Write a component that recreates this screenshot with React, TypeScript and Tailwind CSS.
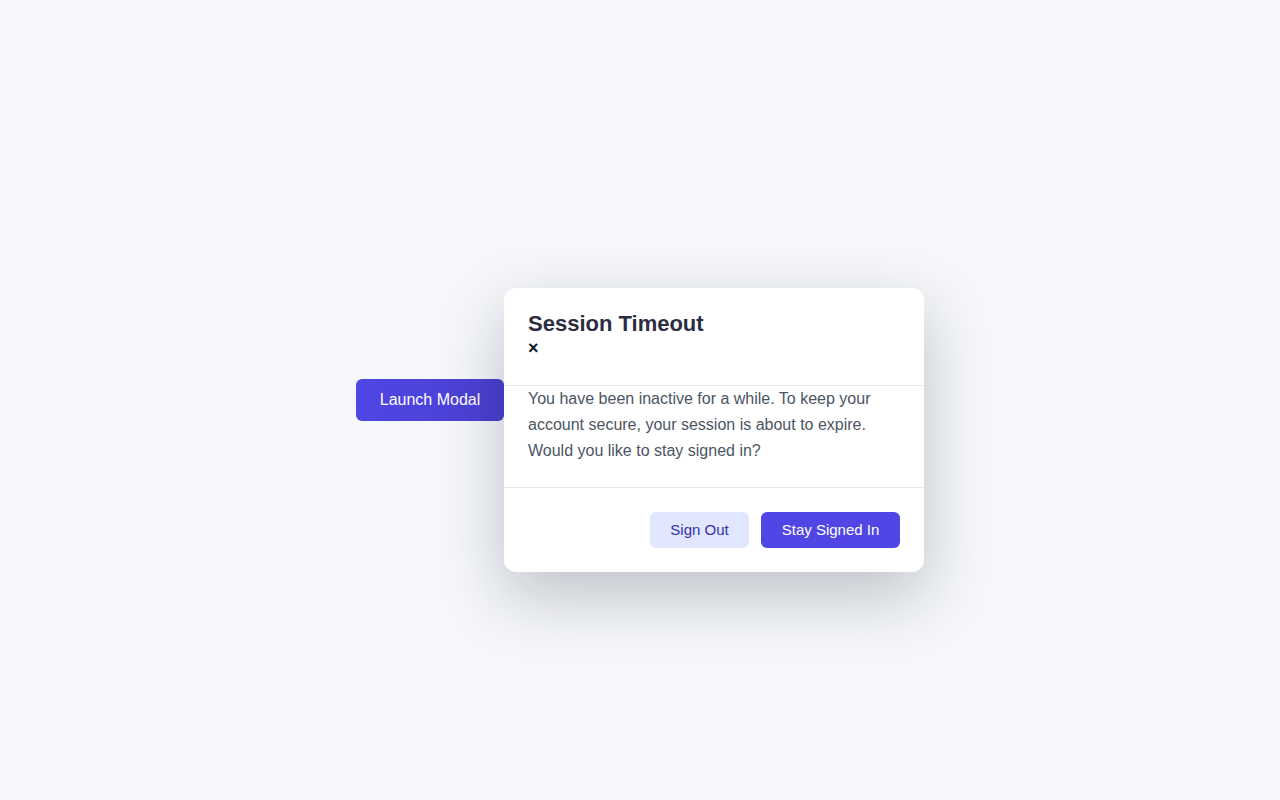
import React from 'react';

export default function App() {
  return (
    <div
      className="min-h-screen w-full bg-[#f5f7fa] flex items-center justify-center"
      style={{ fontFamily: '"Liberation Sans", Arial, Helvetica, sans-serif' }}
    >
      <button className="h-[42px] w-[148px] rounded-md bg-gradient-to-r from-[#4f46e5] to-[#4a40d0] text-white text-base">
        Launch Modal
      </button>

      <div className="mt-[60px] w-[420px] rounded-xl bg-white shadow-[0_24px_64px_rgba(15,23,42,0.24)]">
        <div className="px-6 pt-6 pb-6 border-b border-[#e5e7eb]">
          <h2 className="text-[22px] leading-6 font-bold text-[#2b2d42]">Session Timeout</h2>
          <button className="block text-lg leading-[25px] font-bold text-[#111827] p-0">×</button>
        </div>
        <div className="px-6 pb-[23px] border-b border-[#e5e7eb]">
          <p className="text-base leading-[26px] text-[#4b5563]">
            You have been inactive for a while. To keep your account secure, your session is about to expire. Would you like to stay signed in?
          </p>
        </div>
        <div className="p-6 flex justify-end gap-3">
          <button className="h-9 w-[99px] rounded-md bg-[#e0e7ff] text-[#3730a3] text-[15px]">Sign Out</button>
          <button className="h-9 w-[139px] rounded-md bg-[#4f46e5] text-white text-[15px]">Stay Signed In</button>
        </div>
      </div>
    </div>
  );
}
